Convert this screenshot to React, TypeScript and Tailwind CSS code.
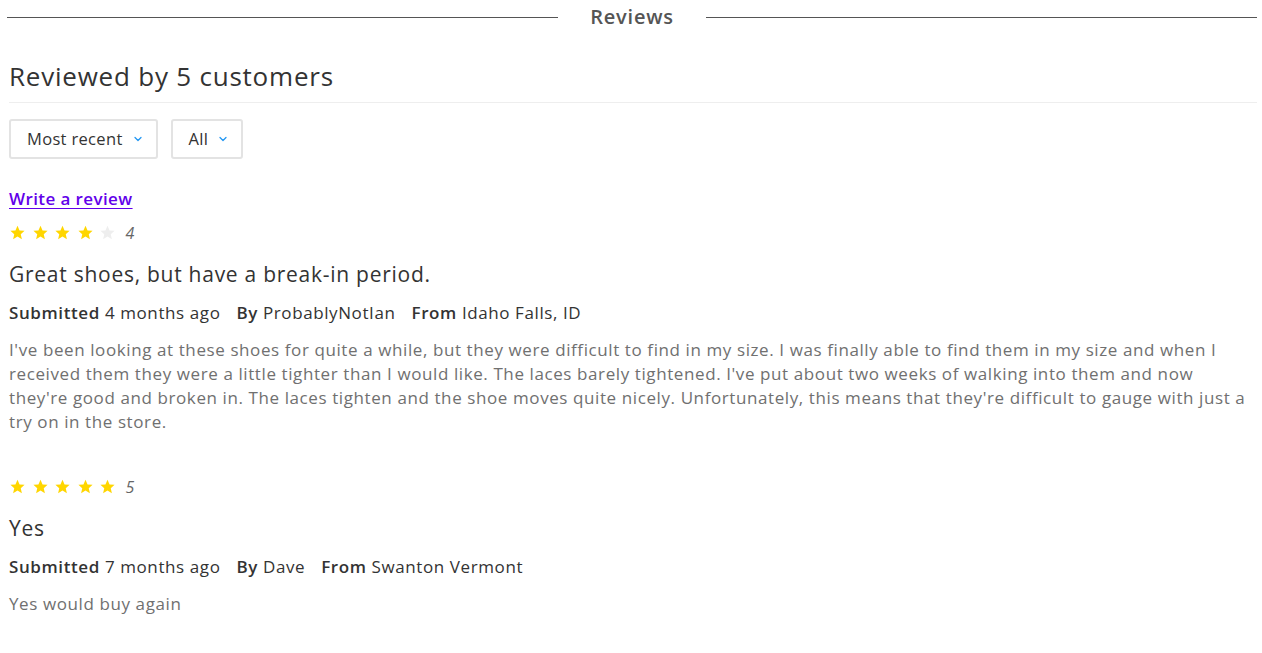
import { ChevronDown } from "lucide-react";

const reviews = [
  {
    rating: 4,
    title: "Great shoes, but have a break-in period.",
    submitted: "4 months ago",
    by: "ProbablyNotIan",
    from: "Idaho Falls, ID",
    body: "I've been looking at these shoes for quite a while, but they were difficult to find in my size. I was finally able to find them in my size and when I received them they were a little tighter than I would like. The laces barely tightened. I've put about two weeks of walking into them and now they're good and broken in. The laces tighten and the shoe moves quite nicely. Unfortunately, this means that they're difficult to gauge with just a try on in the store.",
  },
  {
    rating: 5,
    title: "Yes",
    submitted: "7 months ago",
    by: "Dave",
    from: "Swanton Vermont",
    body: "Yes would buy again",
  },
];

function Star({ filled }: { filled: boolean }) {
  return (
    <svg viewBox="0 0 24 24" className="w-[17px] h-[17px]">
      <path
        d="M12 2.5l2.9 6.6 7.1.6-5.4 4.7 1.6 7-6.2-3.7-6.2 3.7 1.6-7L2 9.7l7.1-.6z"
        fill={filled ? "#ffd600" : "#eeeeee"}
      />
    </svg>
  );
}

function Dropdown({ label }: { label: string }) {
  return (
    <button className="flex items-center gap-[9px] h-10 pl-[16px] pr-[12px] border-2 border-[#e3e3e3] rounded-[3px] bg-white text-[16.5px] tracking-[0.02em] text-[#333]">
      {label}
      <ChevronDown className="w-[12px] h-[12px] text-[#2196f3]" strokeWidth={2.5} />
    </button>
  );
}

export default function App() {
  return (
    <div className="bg-white min-h-screen pl-[9px] pr-[5px] pt-[2px] font-['Open_Sans',sans-serif] tracking-[0.025em]">
      <div className="flex items-center -ml-[2px]">
        <div className="flex-1 h-px bg-[#555]" />
        <h3 className="px-[32px] text-[20px] font-semibold text-[#555] tracking-[0.04em]">Reviews</h3>
        <div className="flex-1 h-px bg-[#555]" />
      </div>

      <h2 className="mt-[28px] text-[26px] text-[#333] leading-[32px] pb-[10px] border-b border-[#eee] tracking-[0.03em]">
        Reviewed by 5 customers
      </h2>

      <div className="flex gap-[13px] mt-[16px]">
        <Dropdown label="Most recent" />
        <Dropdown label="All" />
      </div>

      <a href="#" className="inline-block mt-[27px] text-[17px] font-semibold text-[#6200ea] underline underline-offset-[3px]">
        Write a review
      </a>

      {reviews.map((r, i) => (
        <div key={i} className={i === 0 ? "mt-[9px]" : "mt-[41px]"}>
          <div className="flex items-center gap-[5.5px]">
            {[1, 2, 3, 4, 5].map((n) => (
              <Star key={n} filled={n <= r.rating} />
            ))}
            <span className="ml-[4px] text-[16px] italic text-[#666]">{r.rating}</span>
          </div>
          <h4 className="mt-[15px] text-[21px] text-[#333] leading-[28px] tracking-[0.035em]">{r.title}</h4>
          <div className="flex gap-[16px] mt-[13px] text-[17px] text-[#333] leading-[24px] tracking-[0.035em]">
            <span><b className="font-semibold">Submitted</b> {r.submitted}</span>
            <span><b className="font-semibold">By</b> {r.by}</span>
            <span><b className="font-semibold">From</b> {r.from}</span>
          </div>
          <p className="mt-[13px] text-[17px] text-[#707070] leading-[24px] tracking-[0.035em]">{r.body}</p>
        </div>
      ))}
    </div>
  );
}
